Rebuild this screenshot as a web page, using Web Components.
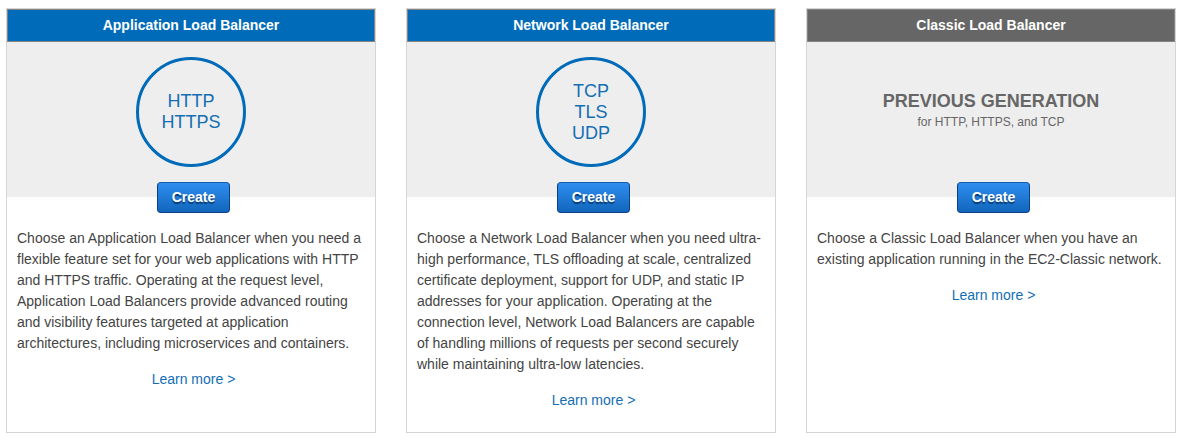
<!DOCTYPE html>
<html lang="en">
<head>
<meta charset="utf-8">
<meta name="viewport" content="width=device-width, initial-scale=1">
<title>Select load balancer type</title>
<style>
  body {
    margin: 0;
    background: #fff;
    color: #444;
    font: 14px/21px "Liberation Sans", Arial, sans-serif;
  }
</style>
</head>
<body>
<balancer-grid>
  <balancer-card heading="Application Load Balancer">
    <protocol-ring slot="hero"><span>HTTP</span><span>HTTPS</span></protocol-ring>
    Choose an Application Load Balancer when you need a flexible feature set for your web applications with HTTP and HTTPS traffic. Operating at the request level, Application Load Balancers provide advanced routing and visibility features targeted at application architectures, including microservices and containers.
  </balancer-card>
  <balancer-card heading="Network Load Balancer">
    <protocol-ring slot="hero"><span>TCP</span><span>TLS</span><span>UDP</span></protocol-ring>
    Choose a Network Load Balancer when you need ultra-high performance, TLS offloading at scale, centralized certificate deployment, support for UDP, and static IP addresses for your application. Operating at the connection level, Network Load Balancers are capable of handling millions of requests per second securely while maintaining ultra-low latencies.
  </balancer-card>
  <balancer-card heading="Classic Load Balancer" class="previous">
    <generation-note slot="hero">PREVIOUS GENERATION<span slot="detail">for HTTP, HTTPS, and TCP</span></generation-note>
    Choose a Classic Load Balancer when you have an existing application running in the EC2-Classic network.
  </balancer-card>
</balancer-grid>

<template id="grid-template">
  <style>
    :host {
      display: grid;
      grid-template-columns: repeat(auto-fit, minmax(300px, 1fr));
      gap: 30px;
      padding: 8px 8px 8px 6px;
    }
  </style>
  <slot></slot>
</template>

<template id="card-template">
  <style>
    :host {
      --header-color: #006bb8;
      display: flex;
      flex-direction: column;
      border: 1px solid #d5d5d5;
      background: #fff;
    }
    :host(.previous) { --header-color: #666; }
    h2 {
      margin: 0;
      padding: 5px 10px;
      border: 1px solid #848484;
      background: var(--header-color);
      color: #fff;
      font-size: 14px;
      line-height: 21px;
      text-align: center;
    }
    .hero {
      display: flex;
      flex-direction: column;
      align-items: center;
      gap: 15px;
      padding-top: 15px;
      background: #eee;
    }
    create-button { margin: 0 0 -16px 5px; }
    .body {
      display: flex;
      flex-direction: column;
      gap: 15px;
      padding: 31px 10px 21px;
    }
    p { margin: 0; }
    a {
      align-self: center;
      margin-left: 5px;
      color: #146eb4;
      text-decoration: none;
    }
    a:hover { text-decoration: underline; }
  </style>
  <h2></h2>
  <div class="hero">
    <slot name="hero"></slot>
    <create-button></create-button>
  </div>
  <div class="body">
    <p><slot></slot></p>
    <a href="#">Learn more &gt;</a>
  </div>
</template>

<template id="ring-template">
  <style>
    :host {
      display: flex;
      flex-direction: column;
      align-items: center;
      justify-content: center;
      box-sizing: border-box;
      width: 110px;
      height: 110px;
      border: 3px solid #006bb8;
      border-radius: 50%;
      color: #146eb4;
      font-size: 18px;
      line-height: 21px;
    }
  </style>
  <slot></slot>
</template>

<template id="note-template">
  <style>
    :host {
      display: flex;
      flex-direction: column;
      justify-content: center;
      height: 110px;
      color: #666;
      text-align: center;
    }
    strong { font-size: 18px; }
    small { font-size: 12px; }
  </style>
  <strong><slot></slot></strong>
  <small><slot name="detail"></slot></small>
</template>

<template id="button-template">
  <style>
    :host { display: block; }
    button {
      display: block;
      padding: 4px 14px;
      border: 1px solid #0d4280;
      border-top-color: #165ba8;
      border-radius: 4px;
      background: linear-gradient(#2f8df0, #1166bb);
      color: #fff;
      font: bold 14px/21px "Liberation Sans", Arial, sans-serif;
      text-shadow: 0 2px 1px #083a70;
      cursor: pointer;
    }
  </style>
  <button type="button">Create</button>
</template>

<script>
  class TemplateElement extends HTMLElement {
    constructor() {
      super();
      const template = document.getElementById(this.constructor.templateId);
      this.attachShadow({ mode: "open" }).append(template.content.cloneNode(true));
    }
  }

  class BalancerGrid extends TemplateElement {
    static templateId = "grid-template";
  }

  class BalancerCard extends TemplateElement {
    static templateId = "card-template";
    static observedAttributes = ["heading"];
    attributeChangedCallback(name, previous, value) {
      this.shadowRoot.querySelector("h2").textContent = value;
    }
  }

  class ProtocolRing extends TemplateElement {
    static templateId = "ring-template";
  }

  class GenerationNote extends TemplateElement {
    static templateId = "note-template";
  }

  class CreateButton extends TemplateElement {
    static templateId = "button-template";
  }

  customElements.define("create-button", CreateButton);
  customElements.define("protocol-ring", ProtocolRing);
  customElements.define("generation-note", GenerationNote);
  customElements.define("balancer-card", BalancerCard);
  customElements.define("balancer-grid", BalancerGrid);
</script>
</body>
</html>
